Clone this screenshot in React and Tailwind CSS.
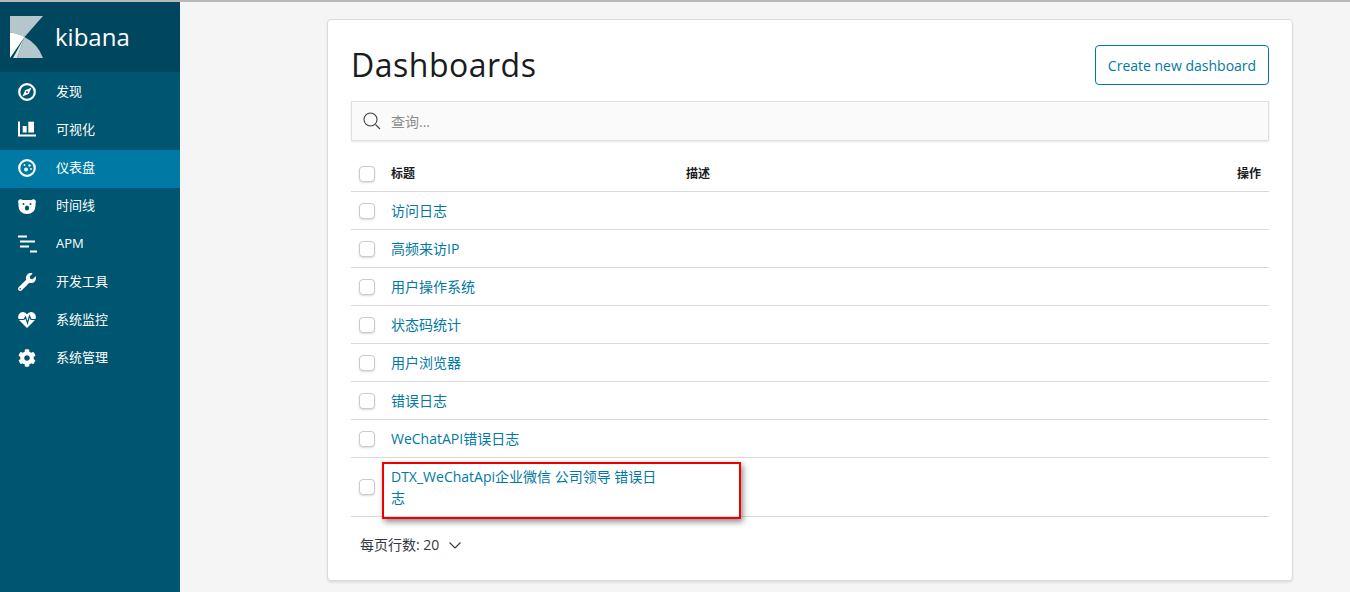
import React from 'react';
import { FaWrench, FaCog } from 'react-icons/fa';

const Logo = () => (
    <svg width="34" height="43" viewBox="10 16 34 43">
        <path d="M10 16H43L24.5 37Q17 33 10 32.5Z" fill="#b5c6cd" />
        <path d="M24.5 37Q38 44 43 58H17Z" fill="#b5c6cd" />
        <path d="M24.5 37L13 58H17Z" fill="#dfe6e9" />
        <path d="M10 32.5Q17 33 24.5 37L10 58Z" fill="#fff" />
    </svg>
);

const CompassIcon = () => (
    <svg width="18" height="18" viewBox="0 0 18 18">
        <circle cx="9" cy="9" r="7.8" fill="none" stroke="#fff" strokeWidth="2.2" />
        <path d="M13.6 4.4L10.8 10.8L4.4 13.6L7.2 7.2Z" fill="#fff" />
        <circle cx="9" cy="9" r="1" fill="#005571" />
    </svg>
);

const ChartIcon = () => (
    <svg width="18" height="18" viewBox="0 0 18 18" fill="#fff">
        <path d="M0 0.5H2V13.5H18V15.5H0Z" />
        <rect x="4.7" y="5" width="4" height="6.5" />
        <rect x="10.3" y="0.7" width="5.7" height="10.8" />
    </svg>
);

const GaugeIcon = () => (
    <svg width="18" height="18" viewBox="0 0 18 18">
        <circle cx="9" cy="9" r="7.8" fill="none" stroke="#fff" strokeWidth="2.2" />
        <circle cx="8" cy="10.5" r="2" fill="#fff" />
        <circle cx="11.5" cy="6.5" r="1.2" fill="#fff" />
        <circle cx="6.5" cy="6" r="0.9" fill="#fff" />
        <circle cx="13" cy="10" r="0.9" fill="#fff" />
    </svg>
);

const BearIcon = () => (
    <svg width="18" height="15" viewBox="0 0 18 15">
        <path d="M1 0.7Q3 -0.3 4.5 1H13.5Q15 -0.3 17 0.7Q18.5 2 17.5 4.5Q18 9.5 15.5 12.5Q12.5 15 9 15Q5.5 15 2.5 12.5Q0 9.5 0.5 4.5Q-0.5 2 1 0.7Z" fill="#fff" />
        <circle cx="5.5" cy="5" r="1" fill="#005571" />
        <circle cx="12.5" cy="5" r="1" fill="#005571" />
        <ellipse cx="9" cy="9" rx="2.2" ry="2.5" fill="#005571" />
    </svg>
);

const ApmIcon = () => (
    <svg width="19" height="18" viewBox="0 0 19 18" fill="#fff">
        <rect x="0" y="0.5" width="9" height="2" />
        <rect x="2" y="5.5" width="15" height="2" />
        <rect x="2" y="10.5" width="9" height="2" />
        <rect x="12" y="15.5" width="7" height="2" />
    </svg>
);

const HeartIcon = () => (
    <svg width="18" height="18" viewBox="0 0 18 18">
        <path d="M9 17L1.5 9.5Q-1 6.5 1 3Q3 0.5 6 1.2Q8 1.8 9 3.5Q10 1.8 12 1.2Q15 0.5 17 3Q19 6.5 16.5 9.5Z" fill="#fff" />
        <path d="M0 8.5H6L7.5 6L9.5 12L11.5 5L13 8.5H18" fill="none" stroke="#005571" strokeWidth="1.2" />
    </svg>
);

const menuItems = [
    { title: '发现', icon: <CompassIcon /> },
    { title: '可视化', icon: <ChartIcon /> },
    { title: '仪表盘', icon: <GaugeIcon />, active: true },
    { title: '时间线', icon: <BearIcon /> },
    { title: 'APM', icon: <ApmIcon /> },
    { title: '开发工具', icon: <FaWrench size={18} color="#fff" /> },
    { title: '系统监控', icon: <HeartIcon /> },
    { title: '系统管理', icon: <FaCog size={18} color="#fff" /> },
];

const rows = ['访问日志', '高频来访IP', '用户操作系统', '状态码统计', '用户浏览器', '错误日志', 'WeChatAPI错误日志'];

const Checkbox = () => (
    <div className="h-4 w-4 rounded-[4px] border border-[#c9cbcd] bg-white shadow-[0_1px_2px_rgba(0,0,0,0.15)]"></div>
);

const Row = ({ title, tall }) => (
    <div className={`flex items-center border-b border-[#d9d9d9] ${tall ? 'h-[59px]' : 'h-[38px]'}`}>
        <div className="flex w-8 shrink-0 justify-center">
            <Checkbox />
        </div>
        <div className="w-[295px] shrink-0 px-2 text-[14px] leading-[21px] text-[#0079a5]">{title}</div>
    </div>
);

export default function App() {
    return (
        <div className="relative flex h-[592px] w-[1350px] overflow-hidden border-t-2 border-[#b9b9b9] bg-[#f5f5f5] font-['Open_Sans','Noto_Sans_CJK_SC',sans-serif]">
            <aside className="flex w-[180px] shrink-0 flex-col bg-[#005571]">
                <div className="mb-[2px] flex h-[70px] items-center gap-[11px] bg-[#00465f] pl-[10px]">
                    <Logo />
                    <span className="text-[24px] font-medium leading-none text-white">kibana</span>
                </div>
                {menuItems.map((item) => (
                    <div
                        key={item.title}
                        className={`flex h-[38px] items-center pb-[2px] ${item.active ? 'bg-[#0079a5]' : ''}`}
                    >
                        <span className="flex w-[56px] justify-center pr-[2px]">{item.icon}</span>
                        <span className="text-[13px] text-white">{item.title}</span>
                    </div>
                ))}
            </aside>

            <main className="flex-1 pl-[147px] pt-[17px]">
                <div className="h-[562px] w-[966px] rounded-[4px] border border-[#d9d9d9] bg-white px-[23px] pt-[24px] shadow-[0_2px_2px_rgba(0,0,0,0.08)]">
                    <div className="flex items-start justify-between">
                        <h1 className="mt-[1px] text-[32px] font-medium leading-[40px] tracking-[0.5px] text-[#1a1c21]">Dashboards</h1>
                        <button className="mt-[1px] h-10 w-[174px] rounded-[4px] border border-[#0079a5] bg-white text-[14px] text-[#0079a5]">
                            Create new dashboard
                        </button>
                    </div>

                    <div className="mt-4 flex h-10 items-center border border-[#e0e0e0] bg-[#fafafa] pl-[11px] shadow-[0_1px_2px_rgba(0,0,0,0.1)]">
                        <svg width="18" height="18" viewBox="0 0 18 18" fill="none" stroke="#444" strokeWidth="1.1">
                            <circle cx="7.5" cy="7.5" r="6.5" />
                            <path d="M12.5 12.5L17 17" />
                        </svg>
                        <span className="ml-[10px] text-[14px] text-[#8c8c8c]">查询...</span>
                    </div>

                    <div className="mt-[15px] flex h-9 items-center border-b border-[#d9d9d9] text-[12px] font-semibold text-[#1a1c21]">
                        <div className="flex w-8 shrink-0 justify-center">
                            <Checkbox />
                        </div>
                        <div className="w-[295px] shrink-0 px-2">标题</div>
                        <div className="flex-1 px-2">描述</div>
                        <div className="px-2">操作</div>
                    </div>

                    {rows.map((title) => (
                        <Row key={title} title={title} />
                    ))}
                    <Row title="DTX_WeChatApi企业微信 公司领导 错误日志" tall />

                    <div className="mt-[18px] flex items-center pl-[9px] text-[14px] leading-[20px] text-[#343741]">
                        <span>每页行数: 20</span>
                        <svg className="ml-[10px]" width="12" height="7" viewBox="0 0 12 7" fill="none" stroke="#343741" strokeWidth="1.1">
                            <path d="M0.5 0.5L6 6L11.5 0.5" />
                        </svg>
                    </div>
                </div>
            </main>

            <div className="absolute left-[382px] top-[460px] h-[57px] w-[359px] border-2 border-[#f00000] shadow-[2px_3px_6px_rgba(0,0,0,0.45)]"></div>
        </div>
    );
}
